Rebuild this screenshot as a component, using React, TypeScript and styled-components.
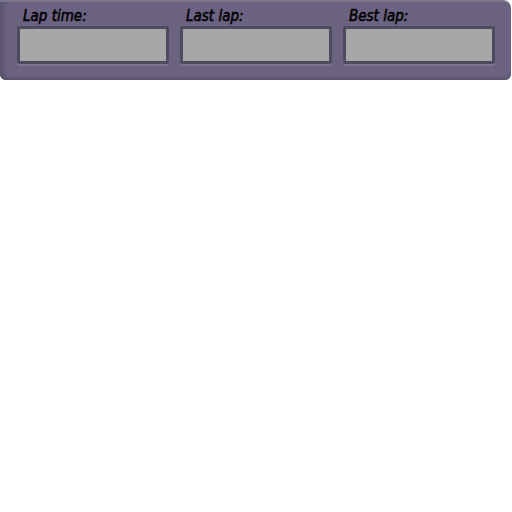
import styled, { createGlobalStyle } from 'styled-components'

const GlobalStyle = createGlobalStyle`
  html, body {
    margin: 0;
    padding: 0;
    background: #ffffff;
  }
`

const Panel = styled.div`
  box-sizing: border-box;
  width: 511px;
  height: 80px;
  display: flex;
  gap: 11px;
  padding: 6px 0 0 17px;
  background: #6b6381;
  border-top: 2px solid #7b778b;
  border-radius: 0 8px 6px 6px;
  box-shadow: inset 6px 0 6px -3px #56506a, inset 0 -3px 3px -1px #5a546e;
`

const Field = styled.div`
  display: flex;
  flex-direction: column;
  width: 152px;
`

const Label = styled.div`
  height: 18px;
  padding-left: 6px;
  font-family: 'DejaVu Sans Condensed', 'DejaVu Sans', sans-serif;
  font-style: italic;
  font-weight: normal;
  font-size: 15px;
  line-height: 16px;
  -webkit-text-stroke: 0.5px #000000;
  color: #000000;
`

const Display = styled.div`
  box-sizing: border-box;
  height: 38px;
  background: #a7a7a7;
  border: 3px solid #4f4b5f;
  border-radius: 2px;
  box-shadow: 0 2px 0 #7a7590;
`

const fields = ['Lap time:', 'Last lap:', 'Best lap:']

export default function App() {
  return (
    <>
      <GlobalStyle />
      <Panel>
        {fields.map((f) => (
          <Field key={f}>
            <Label>{f}</Label>
            <Display />
          </Field>
        ))}
      </Panel>
    </>
  )
}
